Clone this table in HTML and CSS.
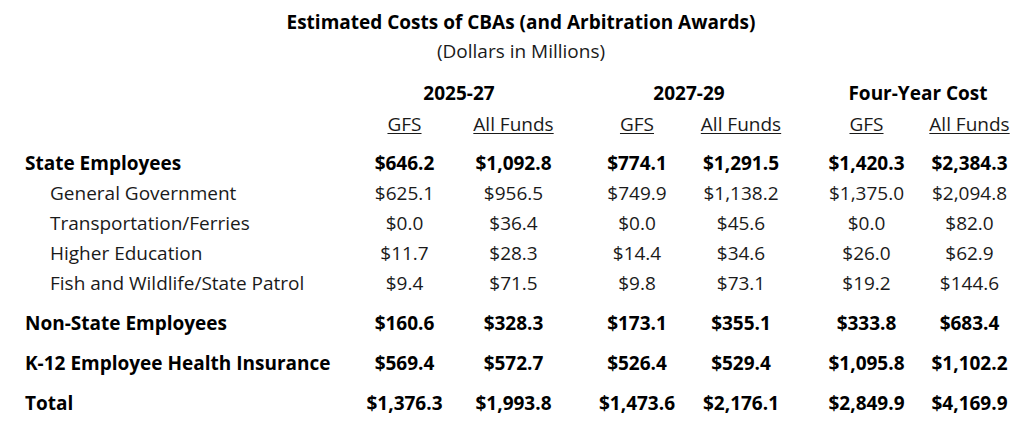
FILE: index.html
```html
<!DOCTYPE html>
<html>
<head>
<meta charset="utf-8">
<link rel="stylesheet" href="styles.css">
</head>
<body>
<div class="report">
  <div class="title">Estimated Costs of CBAs (and Arbitration Awards)</div>
  <div class="subtitle">(Dollars in Millions)</div>

  <div class="row years bold">
    <div class="g1">2025-27</div>
    <div class="g2">2027-29</div>
    <div class="g3">Four-Year Cost</div>
  </div>
  <div class="row subheads">
    <div class="v1"><span class="u">GFS</span></div>
    <div class="v2"><span class="u">All Funds</span></div>
    <div class="v3"><span class="u">GFS</span></div>
    <div class="v4"><span class="u">All Funds</span></div>
    <div class="v5"><span class="u">GFS</span></div>
    <div class="v6"><span class="u">All Funds</span></div>
  </div>

  <div class="section first">
    <div class="row bold">
      <div class="label">State Employees</div>
      <div class="v1">$646.2</div><div class="v2">$1,092.8</div>
      <div class="v3">$774.1</div><div class="v4">$1,291.5</div>
      <div class="v5">$1,420.3</div><div class="v6">$2,384.3</div>
    </div>
    <div class="row">
      <div class="label sub">General Government</div>
      <div class="v1">$625.1</div><div class="v2">$956.5</div>
      <div class="v3">$749.9</div><div class="v4">$1,138.2</div>
      <div class="v5">$1,375.0</div><div class="v6">$2,094.8</div>
    </div>
    <div class="row">
      <div class="label sub">Transportation/Ferries</div>
      <div class="v1">$0.0</div><div class="v2">$36.4</div>
      <div class="v3">$0.0</div><div class="v4">$45.6</div>
      <div class="v5">$0.0</div><div class="v6">$82.0</div>
    </div>
    <div class="row">
      <div class="label sub">Higher Education</div>
      <div class="v1">$11.7</div><div class="v2">$28.3</div>
      <div class="v3">$14.4</div><div class="v4">$34.6</div>
      <div class="v5">$26.0</div><div class="v6">$62.9</div>
    </div>
    <div class="row">
      <div class="label sub">Fish and Wildlife/State Patrol</div>
      <div class="v1">$9.4</div><div class="v2">$71.5</div>
      <div class="v3">$9.8</div><div class="v4">$73.1</div>
      <div class="v5">$19.2</div><div class="v6">$144.6</div>
    </div>
  </div>

  <div class="section">
    <div class="row bold">
      <div class="label">Non-State Employees</div>
      <div class="v1">$160.6</div><div class="v2">$328.3</div>
      <div class="v3">$173.1</div><div class="v4">$355.1</div>
      <div class="v5">$333.8</div><div class="v6">$683.4</div>
    </div>
  </div>

  <div class="section">
    <div class="row bold">
      <div class="label">K-12 Employee Health Insurance</div>
      <div class="v1">$569.4</div><div class="v2">$572.7</div>
      <div class="v3">$526.4</div><div class="v4">$529.4</div>
      <div class="v5">$1,095.8</div><div class="v6">$1,102.2</div>
    </div>
  </div>

  <div class="section">
    <div class="row bold">
      <div class="label">Total</div>
      <div class="v1">$1,376.3</div><div class="v2">$1,993.8</div>
      <div class="v3">$1,473.6</div><div class="v4">$2,176.1</div>
      <div class="v5">$2,849.9</div><div class="v6">$4,169.9</div>
    </div>
  </div>
</div>
</body>
</html>
```

FILE: styles.css
```css
html, body {
  margin: 0;
  padding: 0;
  background: #ffffff;
}

body {
  font-family: "Open Sans", "Noto Sans", sans-serif;
  font-size: 19px;
  line-height: 30px;
  color: #1a1a1a;
}

.report {
  width: 992px;
  padding: 7px 0 0 25px;
}

.title {
  text-align: center;
  font-weight: 700;
  color: #000;
}

.subtitle {
  text-align: center;
  margin-top: -1px;
}

.row {
  display: grid;
  grid-template-columns: 325px 109px 109px 17px 104px 104px 22px 103px 103px;
  white-space: nowrap;
}

.row > div {
  text-align: center;
}

.row > .label {
  grid-column: 1;
  text-align: left;
}

.row > .label.sub {
  padding-left: 25px;
}

.bold {
  font-weight: 700;
  color: #000;
}

.years {
  margin-top: 12px;
}

.subheads {
  margin-top: 1px;
}

.u {
  text-decoration: underline;
  text-underline-offset: 2px;
}

.section {
  margin-top: 10px;
}

.section.first {
  margin-top: 9px;
}

.v1 { grid-column: 2; }
.v2 { grid-column: 3; }
.v3 { grid-column: 5; }
.v4 { grid-column: 6; }
.v5 { grid-column: 8; }
.v6 { grid-column: 9; }

.g1 { grid-column: 2 / 4; }
.g2 { grid-column: 5 / 7; }
.g3 { grid-column: 8 / 10; }
```
